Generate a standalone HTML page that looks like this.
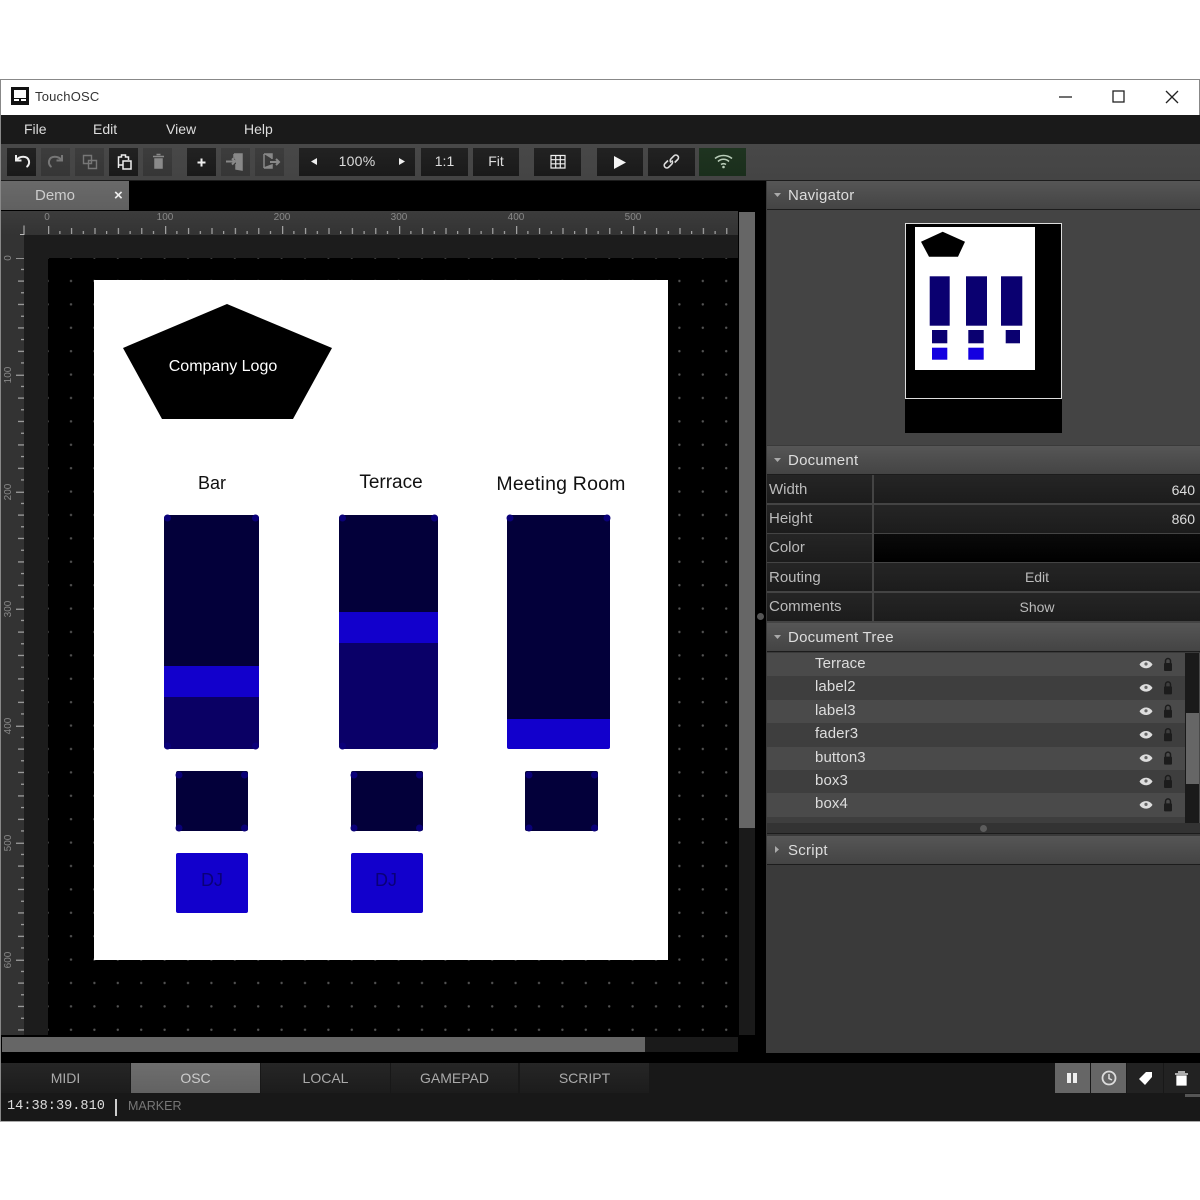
<!DOCTYPE html>
<html><head><meta charset="utf-8"><title>TouchOSC</title>
<style>
html,body{margin:0;padding:0;background:#fff}
#r{position:relative;width:1200px;height:1200px;overflow:hidden;background:#fff;font-family:"Liberation Sans",sans-serif}
#r div{position:absolute;box-sizing:border-box}
.t{white-space:nowrap;color:#ddd;font-size:15px;letter-spacing:.25px;line-height:20px;height:20px}
.c{text-align:center}
.b{background:linear-gradient(#222,#1a1a1a);top:148px;height:28px}
.o{background:linear-gradient(#3d3d3d,#363636);top:148px;height:28px}
.h{left:767px;width:433px;height:29px;background:linear-gradient(#565656,#444);border-bottom:1px solid #1c1c1c}
.v{background:linear-gradient(#252525,#1c1c1c);height:28px}
.l{left:767px;width:105px}
.w{left:874px;width:326px}
.ln{color:#bbb;left:769px;letter-spacing:0}
.tr{left:767px;width:418px;height:23.4px}
.tn{left:815px}
svg{position:absolute;overflow:visible}
.tab{top:1063px;height:30px;background:linear-gradient(#262626,#1c1c1c);color:#aaa;text-align:center;line-height:31px;font-size:14px;white-space:nowrap}
.rl{color:#888;font-size:10px;line-height:12px;white-space:nowrap;height:12px}
.vr{transform:rotate(-90deg);width:30px;text-align:center;left:-6px}
</style></head><body>
<div id="r">
<!-- window frame -->
<div style="left:0;top:79px;width:1200px;height:1043px;border:1px solid #888;border-bottom:0;background:#fff"></div>
<div style="left:11px;top:87px;width:18px;height:18px;background:#111"></div>
<svg style="left:11px;top:87px" width="18" height="18"><rect x="3" y="3" width="12" height="8" fill="#fff"/><rect x="3" y="12" width="5" height="2" fill="#fff"/><rect x="10" y="12" width="5" height="2" fill="#fff"/></svg>
<div class="t" style="left:35px;top:87px;color:#333;font-size:13px;letter-spacing:.2px">TouchOSC</div>
<svg style="left:1050px;top:85px" width="140" height="24" fill="none" stroke="#222" stroke-width="1.3"><path d="M9 12H22"/><rect x="63" y="6" width="11" height="11"/><path d="M116 6L128 18M128 6L116 18"/></svg>
<!-- menu -->
<div style="left:1px;top:115px;width:1199px;height:29px;background:#1a1a1a"></div>
<div class="t" style="left:24px;top:119px;font-size:14px;letter-spacing:0">File</div>
<div class="t" style="left:93px;top:119px;font-size:14px;letter-spacing:0">Edit</div>
<div class="t" style="left:166px;top:119px;font-size:14px;letter-spacing:0">View</div>
<div class="t" style="left:244px;top:119px;font-size:14px;letter-spacing:0">Help</div>
<!-- toolbar -->
<div style="left:1px;top:144px;width:1199px;height:37px;background:linear-gradient(#484848,#444);border-bottom:1px solid #1c1c1c"></div>
<div class="b" style="left:7px;width:29px"></div>
<div class="o" style="left:41px;width:29px"></div>
<div class="o" style="left:75px;width:29px"></div>
<div class="b" style="left:109px;width:29px"></div>
<div class="o" style="left:143px;width:29px"></div>
<div class="b" style="left:187px;width:29px"></div>
<div class="o" style="left:221px;width:29px"></div>
<div class="o" style="left:255px;width:29px"></div>
<div class="b" style="left:299px;width:116px"></div>
<div class="b" style="left:421px;width:47px"></div>
<div class="b" style="left:473px;width:46px"></div>
<div class="b" style="left:534px;width:47px"></div>
<div class="b" style="left:597px;width:46px"></div>
<div class="b" style="left:648px;width:47px"></div>
<div style="left:699px;top:148px;width:47px;height:28px;background:linear-gradient(#1f3420,#1a2e1c)"></div>
<svg style="left:0;top:144px" width="760" height="36" fill="none">
<path d="M16 11v5.500h5.500" stroke="#eee" stroke-width="2"/><path d="M16.500 16c3-4 11-5 12.500 1 .5 2.500-.7 5-2.500 6" stroke="#eee" stroke-width="2"/>
<path d="M62 11v5.500h-5.500" stroke="#777" stroke-width="2"/><path d="M61.500 16c-3-4-11-5-12.500 1-.5 2.500.7 5 2.500 6" stroke="#777" stroke-width="2"/>
<path d="M83.500 11.500h8v8h-8zM88.500 16.500h8v8h-8z" stroke="#777" stroke-width="1.400"/>
<path d="M118.500 24v-11h3v-2h4v2h3v3M123 17h8v8h-8zM118.500 21h4" stroke="#eee" stroke-width="1.500"/>
<path d="M153 12.500h11M155 15h7v9h-7zM156.500 10.500h4" stroke="#8a8a8a" stroke-width="1.500" fill="#8a8a8a"/>
<path d="M201.500 14.500v8M197.500 18.500h8" stroke="#eee" stroke-width="2"/>
<path d="M226 17.500h9M232 14.500l3 3-3 3" stroke="#888" stroke-width="2"/><path d="M234 10h8v16l-6-1v-5M234 10v5" stroke="#888" stroke-width="1.500" fill="#888"/>
<path d="M264 10h8v5M272 21v3h-8zM264 10v14" stroke="#888" stroke-width="1.500" fill="#888"/><path d="M270 18h9M276 15l3 3-3 3" stroke="#888" stroke-width="2"/>
<path d="M311 17.500l6-3.500v7z" fill="#eee"/><path d="M405 17.500l-6-3.500v7z" fill="#eee"/>
<path d="M551 11.500h14v12.500h-14zM551 15.700h14M551 19.800h14M555.700 11.500v12.500M560.300 11.500v12.500" stroke="#eee" stroke-width="1.200"/>
<path d="M614 12l12 6.500-12 6.500z" fill="#f4f4f4"/>
<path d="M668 16.500l-3 3a2.600 2.600 0 0 0 3.700 3.700l3-3a2.600 2.600 0 0 0 0-3.700M671 18.500a2.600 2.600 0 0 1 0-3.700l3-3a2.600 2.600 0 0 1 3.700 3.700l-3 3" stroke="#ddd" stroke-width="1.600"/>
<path d="M715 14.500c5-4 12-4 17 0M718 17.500c3-3 8-3 11 0M721 20.500c1.500-1 3.500-1 5 0" stroke="#b9cdb9" stroke-width="1.600"/><circle cx="723.500" cy="23" r="1.300" fill="#b9cdb9"/>
</svg>
<div class="t c" style="left:328px;top:151px;width:58px;font-size:14px">100%</div>
<div class="t c" style="left:421px;top:151px;width:47px;font-size:14px;letter-spacing:0">1:1</div>
<div class="t c" style="left:473px;top:151px;width:46px;font-size:14px;letter-spacing:0">Fit</div>
<!-- tab bar -->
<div style="left:1px;top:181px;width:765px;height:30px;background:#000"></div>
<div style="left:1px;top:181px;width:128px;height:29px;background:linear-gradient(#6a6a6a,#606060)"></div>
<div class="t" style="left:35px;top:186px;color:#ccc;letter-spacing:0">Demo</div>
<div class="t" style="left:114px;top:186px;color:#eee;font-size:15px;font-weight:bold">×</div>
<!-- editor area -->
<div style="left:1px;top:211px;width:765px;height:842px;background:#000"></div>
<div style="left:1px;top:211px;width:737px;height:824px;background:#1c1c1c"></div>
<div style="left:1px;top:211px;width:737px;height:24px;background:linear-gradient(#3c3c3c,#333)"></div>
<div style="left:1px;top:235px;width:23px;height:800px;background:#333"></div>
<div style="left:48px;top:258px;width:690px;height:777px;background:#000"></div>
<svg style="left:0;top:0" width="760" height="1040">
<defs>
<pattern id="g" patternUnits="userSpaceOnUse" x="59.300" y="245.900" width="23.400" height="23.400"><circle cx="11.700" cy="11.700" r="1.200" fill="#555"/></pattern>
<pattern id="tx" patternUnits="userSpaceOnUse" x="48.200" y="226" width="117" height="8"><path d="M.5 0v8M11.700 5v3M23.400 2v6M35.100 5v3M46.800 2v6M58.500 5v3M70.200 2v6M81.900 5v3M93.600 2v6M105.300 5v3" stroke="#bbb" stroke-width="1"/></pattern>
<pattern id="ty" patternUnits="userSpaceOnUse" x="16" y="257.700" width="8" height="117"><path d="M0 .5h8M5 11.700h3M2 23.400h6M5 35.100h3M2 46.800h6M5 58.500h3M2 70.200h6M5 81.900h3M2 93.600h6M5 105.300h3" stroke="#bbb" stroke-width="1"/></pattern>
</defs>
<rect x="48" y="258" width="690" height="777" fill="url(#g)"/>
<rect x="48" y="226" width="680" height="8" fill="url(#tx)"/>
<rect x="16" y="258" width="8" height="774" fill="url(#ty)"/>
<path d="M20 234.500h4v-9" stroke="#bbb" fill="none"/>
</svg>
<div class="rl c" style="left:27px;top:212px;width:40px">0</div>
<div class="rl c" style="left:145px;top:212px;width:40px">100</div>
<div class="rl c" style="left:262px;top:212px;width:40px">200</div>
<div class="rl c" style="left:379px;top:212px;width:40px">300</div>
<div class="rl c" style="left:496px;top:212px;width:40px">400</div>
<div class="rl c" style="left:613px;top:212px;width:40px">500</div>
<div class="rl vr" style="top:252px">0</div>
<div class="rl vr" style="top:369px">100</div>
<div class="rl vr" style="top:486px">200</div>
<div class="rl vr" style="top:603px">300</div>
<div class="rl vr" style="top:720px">400</div>
<div class="rl vr" style="top:837px">500</div>
<div class="rl vr" style="top:954px">600</div>
<!-- scrollbars -->
<div style="left:739px;top:212px;width:16px;height:616px;background:#666"></div>
<div style="left:739px;top:828px;width:16px;height:207px;background:#1a1a1a"></div>
<div style="left:2px;top:1037px;width:643px;height:15px;background:#666"></div>
<div style="left:645px;top:1037px;width:93px;height:15px;background:#1a1a1a"></div>
<div style="left:757px;top:613px;width:7px;height:7px;border-radius:50%;background:#555"></div>
<div style="left:597px;top:1054px;width:7px;height:7px;border-radius:50%;background:#555"></div>
<!-- document -->
<div style="left:94px;top:280px;width:574px;height:680px;background:#fff"></div>
<svg style="left:0;top:0" width="700" height="960">
<polygon points="227,304 332,348 293,419 162,419 123,348" fill="#000"/>
</svg>
<div class="t c" style="left:123px;top:357px;width:200px;color:#fff;font-size:16px;letter-spacing:0">Company Logo</div>
<div class="t c" style="left:162px;top:473px;width:100px;color:#111;font-size:18px;letter-spacing:0">Bar</div>
<div class="t c" style="left:341px;top:473px;width:100px;color:#111;font-size:19px;letter-spacing:0">Terrace</div>
<div class="t c" style="left:481px;top:474px;width:160px;color:#111;font-size:19.500px;letter-spacing:.2px">Meeting Room</div>
<!-- faders -->
<div style="left:164px;top:515px;width:95px;height:234px;background:#03003a;border-radius:3px"></div>
<div style="left:164px;top:697px;width:95px;height:52px;background:#0a0064;border-radius:0 0 3px 3px"></div>
<div style="left:164px;top:666px;width:95px;height:31px;background:#1200cc"></div>
<div style="left:339px;top:515px;width:99px;height:234px;background:#03003a;border-radius:3px"></div>
<div style="left:339px;top:643px;width:99px;height:106px;background:#0a0068;border-radius:0 0 3px 3px"></div>
<div style="left:339px;top:612px;width:99px;height:31px;background:#1200cc"></div>
<div style="left:507px;top:515px;width:103px;height:234px;background:#03003a;border-radius:3px"></div>
<div style="left:507px;top:719px;width:103px;height:30px;background:#1200cc;border-radius:0 0 2px 2px"></div>
<div style="left:176px;top:771px;width:72px;height:60px;background:#03003a;border-radius:2px"></div>
<div style="left:351px;top:771px;width:72px;height:60px;background:#03003a;border-radius:2px"></div>
<div style="left:525px;top:771px;width:73px;height:60px;background:#03003a;border-radius:2px"></div>
<div style="left:176px;top:853px;width:72px;height:60px;background:#1200cc;border-radius:2px"></div>
<div style="left:351px;top:853px;width:72px;height:60px;background:#1200cc;border-radius:2px"></div>
<svg style="left:0;top:0" width="700" height="960">
<g fill="#0a0078">
<circle cx="167.500" cy="518" r="3.500"/><circle cx="255.500" cy="518" r="3.500"/><circle cx="167.500" cy="746" r="3.500"/><circle cx="255.500" cy="746" r="3.500"/>
<circle cx="342.500" cy="518" r="3.500"/><circle cx="434.500" cy="518" r="3.500"/><circle cx="342.500" cy="746" r="3.500"/><circle cx="434.500" cy="746" r="3.500"/>
<circle cx="510" cy="518" r="3.500"/><circle cx="607" cy="518" r="3.500"/>
<circle cx="179" cy="775" r="3.500"/><circle cx="244.500" cy="775" r="3.500"/><circle cx="179" cy="828" r="3.500"/><circle cx="244.500" cy="828" r="3.500"/>
<circle cx="354" cy="775" r="3.500"/><circle cx="419.500" cy="775" r="3.500"/><circle cx="354" cy="828" r="3.500"/><circle cx="419.500" cy="828" r="3.500"/>
<circle cx="529" cy="775" r="3.500"/><circle cx="594.500" cy="775" r="3.500"/><circle cx="529" cy="828" r="3.500"/><circle cx="594.500" cy="828" r="3.500"/>
</g>
</svg>
<div class="t c" style="left:176px;top:870px;width:72px;color:#0a0078;font-size:18px;letter-spacing:0">DJ</div>
<div class="t c" style="left:350px;top:870px;width:72px;color:#0a0078;font-size:18px;letter-spacing:0">DJ</div>
<!-- right panel -->
<div style="left:766px;top:181px;width:434px;height:872px;background:#3a3a3a"></div>
<div class="h" style="top:181px"></div>
<div style="left:767px;top:210px;width:433px;height:235px;background:#444"></div>
<div style="left:905px;top:223px;width:157px;height:210px;background:#000"></div>
<div style="left:905px;top:223px;width:157px;height:176px;border:1px solid #ddd"></div>
<div style="left:915px;top:227px;width:120px;height:143px;background:#fff"></div>
<svg style="left:0;top:0" width="1100" height="400">
<polygon points="942.700,231.700 965,241.700 958,256.700 929,256.700 921,241.700" fill="#000"/>
<g fill="#0a0070">
<rect x="929.700" y="276.300" width="20" height="49.400"/><rect x="966" y="276.300" width="21" height="49.400"/><rect x="1001" y="276.300" width="21.300" height="49.400"/>
<rect x="932" y="330" width="15.300" height="13.300"/><rect x="968.300" y="330" width="15.400" height="13.300"/><rect x="1005.700" y="330" width="14.300" height="13.300"/>
</g>
<g fill="#1400e0"><rect x="932" y="347.700" width="15.300" height="12"/><rect x="968.300" y="347.700" width="15.400" height="12"/></g>
</svg>
<!-- Document -->
<div class="h" style="top:446px"></div>
<div style="left:767px;top:475px;width:433px;height:148px;background:#444"></div>
<div class="v l" style="top:475px"></div><div class="v w" style="top:475px"></div>
<div class="v l" style="top:505px"></div><div class="v w" style="top:505px"></div>
<div class="v l" style="top:534px"></div><div style="left:874px;top:534px;width:326px;height:28px;background:linear-gradient(#0a0a0a,#000)"></div>
<div class="v l" style="top:563px"></div><div class="v w" style="top:563px"></div>
<div class="v l" style="top:593px"></div><div class="v w" style="top:593px"></div>
<div class="h" style="top:623px"></div>
<div class="t" style="left:788px;top:186px">Navigator</div>
<div class="t" style="left:788px;top:451px">Document</div>
<div class="t" style="left:788px;top:628px">Document Tree</div>
<div class="t ln" style="top:480px">Width</div>
<div class="t ln" style="top:509px">Height</div>
<div class="t ln" style="top:538px">Color</div>
<div class="t ln" style="top:568px">Routing</div>
<div class="t ln" style="top:597px">Comments</div>
<div class="t" style="left:1140px;top:480px;width:55px;text-align:right;font-size:14px;letter-spacing:0">640</div>
<div class="t" style="left:1140px;top:509px;width:55px;text-align:right;font-size:14px;letter-spacing:0">860</div>
<div class="t c" style="left:874px;top:567px;width:326px;color:#bbb;font-size:14px;letter-spacing:0">Edit</div>
<div class="t c" style="left:874px;top:597px;width:326px;color:#bbb;font-size:14px;letter-spacing:0">Show</div>
<!-- tree -->
<div style="left:767px;top:653px;width:433px;height:170px;background:#4a4a4a"></div>
<div class="tr" style="top:653px;background:#4a4a4a"></div>
<div class="tr" style="top:676.400px;background:#3e3e3e"></div>
<div class="tr" style="top:699.800px;background:#4a4a4a"></div>
<div class="tr" style="top:723.200px;background:#3e3e3e"></div>
<div class="tr" style="top:746.600px;background:#4a4a4a"></div>
<div class="tr" style="top:770px;background:#3e3e3e"></div>
<div class="tr" style="top:793.400px;background:#4a4a4a"></div>
<div class="tr" style="top:816.800px;height:6px;background:#3e3e3e"></div>
<div style="left:1185px;top:653px;width:14px;height:170px;background:#1a1a1a"></div>
<div style="left:1186px;top:713px;width:13px;height:71px;background:#666"></div>
<div class="t tn" style="top:654px;letter-spacing:.1px">Terrace</div>
<div class="t tn" style="top:677px;letter-spacing:.1px">label2</div>
<div class="t tn" style="top:701px;letter-spacing:.1px">label3</div>
<div class="t tn" style="top:724px;letter-spacing:.1px">fader3</div>
<div class="t tn" style="top:748px;letter-spacing:.1px">button3</div>
<div class="t tn" style="top:771px;letter-spacing:.1px">box3</div>
<div class="t tn" style="top:794px;letter-spacing:.1px">box4</div>
<svg style="left:1130px;top:653px" width="50" height="170">
<defs>
<g id="ei"><path d="M9.500 11.500c3-5 10-5 13 0-3 5-10 5-13 0z" fill="#ddd"/><circle cx="16" cy="11" r="1.600" fill="#666"/><rect x="34" y="10" width="8" height="8" rx="1" fill="#1c1c1c"/><path d="M35.500 11V8a2.500 2.500 0 0 1 5 0v3" fill="none" stroke="#1c1c1c" stroke-width="1.500"/></g>
</defs>
<use href="#ei" y="0"/><use href="#ei" y="23.400"/><use href="#ei" y="46.800"/><use href="#ei" y="70.200"/><use href="#ei" y="93.600"/><use href="#ei" y="117"/><use href="#ei" y="140.400"/>
</svg>
<div style="left:767px;top:823px;width:433px;height:11px;background:#333;border-bottom:1px solid #1c1c1c"></div>
<div style="left:980px;top:825px;width:7px;height:7px;border-radius:50%;background:#5c5c5c"></div>
<div class="h" style="top:836px"></div>
<div class="t" style="left:788px;top:841px">Script</div>
<svg style="left:770px;top:185px" width="16" height="680" fill="#aaa">
<path d="M4 8h7l-3.500 4z"/><path d="M4 273h7l-3.500 4z"/><path d="M4 450h7l-3.500 4z"/><path d="M5 661v7l4-3.500z"/>
</svg>
<!-- bottom -->
<div style="left:1px;top:1053px;width:1199px;height:10px;background:#000"></div>
<div style="left:1px;top:1063px;width:1199px;height:58px;background:#181818"></div>
<div class="tab" style="left:1px;width:129px">MIDI</div>
<div class="tab" style="left:131px;width:129px;background:linear-gradient(#6e6e6e,#626262);color:#ccc">OSC</div>
<div class="tab" style="left:261px;width:129px">LOCAL</div>
<div class="tab" style="left:391px;width:127px">GAMEPAD</div>
<div class="tab" style="left:520px;width:129px">SCRIPT</div>
<div style="left:1055px;top:1063px;width:35px;height:30px;background:#666"></div>
<div style="left:1091px;top:1063px;width:35px;height:30px;background:#666"></div>
<div style="left:1127px;top:1063px;width:36px;height:30px;background:#222"></div>
<div style="left:1164px;top:1063px;width:36px;height:30px;background:#222"></div>
<svg style="left:1055px;top:1063px" width="145" height="30">
<rect x="12" y="10" width="4" height="10" fill="#eee"/><rect x="18" y="10" width="4" height="10" fill="#eee"/>
<circle cx="54" cy="15" r="6.500" fill="none" stroke="#ddd" stroke-width="1.800"/><path d="M54 11v4.500l3 1.500" fill="none" stroke="#ddd" stroke-width="1.500"/>
<path d="M84 16l7-7h6v5l-7 8z" fill="#fff"/>
<path d="M120 11h13M123 9h7M122 13h9v9h-9z" fill="#fff" stroke="#fff" stroke-width="1.300"/>
</svg>
<div class="t" style="left:7px;top:1097px;font-family:'Liberation Mono',monospace;font-size:13.600px;letter-spacing:0;color:#ddd">14:38:39.810</div>
<div style="left:115px;top:1099px;width:1.500px;height:17px;background:#ccc"></div>
<div class="t" style="left:128px;top:1096px;font-size:12.500px;letter-spacing:0;color:#777">MARKER</div>
<div style="left:0;top:1121px;width:1200px;height:1px;background:#aaa"></div>
<div style="left:1185px;top:1094px;width:15px;height:3px;background:#555"></div>
</div>
</body></html>
